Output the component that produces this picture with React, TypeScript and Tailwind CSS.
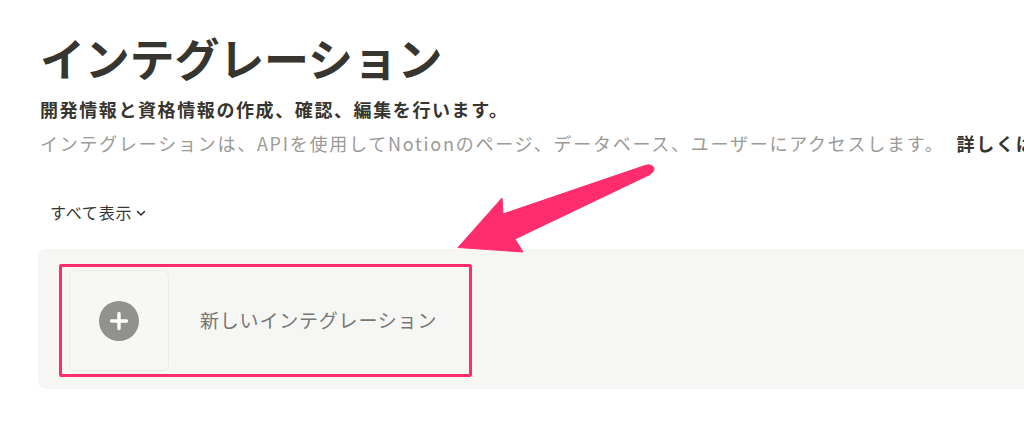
const font = "font-['Noto_Sans_CJK_JP','Noto_Sans',sans-serif]";

const Arrow = () => (
  <svg
    className="absolute left-0 top-0 pointer-events-none"
    width="1024"
    height="440"
    viewBox="0 0 1024 440"
  >
    <path
      d="M645 165.5 L503 214 L502 198 L458 247.5 L523 252 L515 239 L650 174.5 Q656 170 653 166.5 Q650 163.5 645 165.5 Z"
      fill="#ff2d6e"
      stroke="#ff2d6e"
      strokeWidth="1"
      strokeLinejoin="round"
    />
  </svg>
);

export default function App() {
  return (
    <div className={`relative w-[1024px] h-[440px] overflow-hidden bg-white ${font}`}>
      <div className="pt-[26px] pl-10">
        <h1 className="text-[45px] leading-[64px] font-bold text-[#37352f] tracking-[-0.2px]">
          インテグレーション
        </h1>
        <p className="mt-[6px] text-[18px] leading-[26px] font-bold text-[#37352f] tracking-[1.6px] whitespace-nowrap">
          開発情報と資格情報の作成、確認、編集を行います。
        </p>
        <p className="mt-[8px] text-[18px] leading-[26px] text-[#9b9a97] tracking-[1.75px] whitespace-nowrap">
          インテグレーションは、APIを使用してNotionのページ、データベース、ユーザーにアクセスします。
          <span className="ml-3 font-bold text-[#37352f]">詳しくはこちら</span>
        </p>
      </div>

      <div className="mt-[46px] pl-[50px]">
        <button className="flex items-center gap-[3px] text-[16px] leading-5 text-[#37352f] tracking-[0.8px]">
          すべて表示
          <svg width="12" height="12" viewBox="0 0 12 12" className="mt-[2px]">
            <path d="M2.5 4.5 L6 8 L9.5 4.5" fill="none" stroke="#37352f" strokeWidth="1.6" strokeLinecap="round" strokeLinejoin="round" />
          </svg>
        </button>
      </div>

      <div className="mt-[27px] ml-[38px] w-[1100px] h-[140px] rounded-lg bg-[#f6f6f5] pt-[15px] pl-[21px]">
        <div className="flex w-[413px] h-[113px] border-[3px] border-[#ff2d6e] rounded-[2px] py-[3px] pl-[7px]">
          <div className="flex items-center justify-center w-[100px] h-full rounded-md border border-[#ecebe9] bg-[#f7f7f5]">
            <svg width="40" height="40" viewBox="0 0 40 40">
              <circle cx="20" cy="20" r="20" fill="#91918e" />
              <path d="M20 12.5 V27.5 M12.5 20 H27.5" stroke="white" strokeWidth="3.4" strokeLinecap="round" />
            </svg>
          </div>
          <div className="flex items-center pl-[31px] text-[19px] text-[#787774] tracking-[0.8px]">
            新しいインテグレーション
          </div>
        </div>
      </div>

      <Arrow />
    </div>
  );
}
